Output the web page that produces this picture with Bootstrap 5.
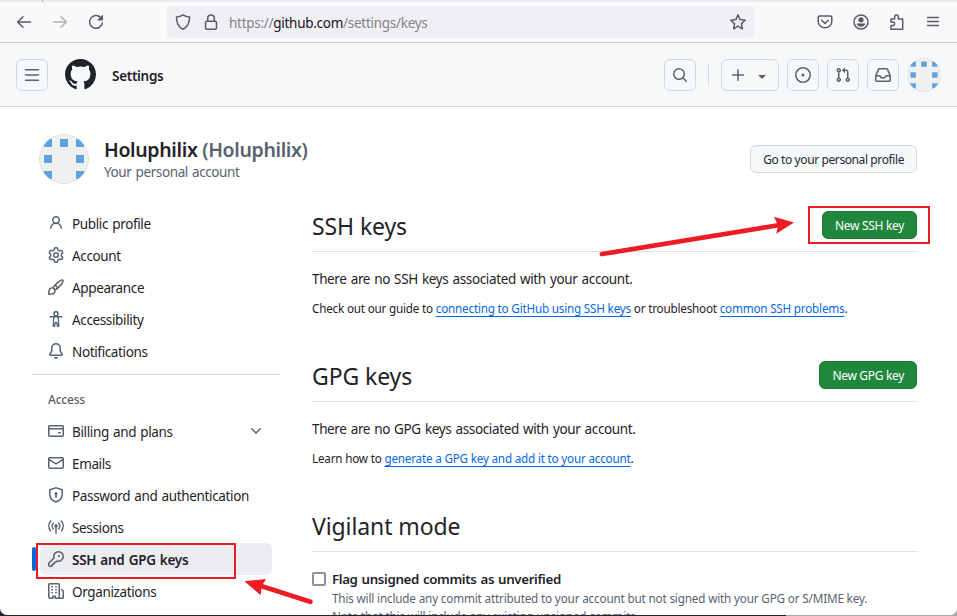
<!DOCTYPE html>
<html lang="en">
<head>
<meta charset="utf-8">
<title>SSH and GPG keys</title>
<link href="https://cdn.jsdelivr.net/npm/bootstrap@5.3.0/dist/css/bootstrap.min.css" rel="stylesheet">
<style>
  body { height: 616px; overflow: hidden; font: 13.5px/20px "Noto Sans", "Open Sans", sans-serif; color: #1f2328;
    background: linear-gradient(90deg, #23252f 786px, #a9a9ab 786px); }
  svg { display: block; flex: none; fill: currentColor; }
  .line { fill: none; stroke: currentColor; stroke-width: 1.5; stroke-linecap: round; stroke-linejoin: round; }
  .window { height: 615px; border-radius: 0 0 7px 7px; background: #fff; }

  .tabstrip { height: 2px; background: #ebebed; }
  .tabstrip span { width: 1px; margin-left: 42px; background: #b8b8bd; }
  .toolbar { height: 41px; padding: 0 16px; background: #f9f9fb; border-bottom: 1px solid #ccccd1; color: #5b5b66; }
  .travel { gap: 20px; height: 40px; }
  .faded { opacity: .45; }
  .urlbar { width: 587px; height: 32px; margin: 4px 0 0 63px; padding: 0 8px; background: #f0f0f4; border-radius: 4px; }
  .lock { margin-left: 12px; }
  .url { margin-left: 10px; padding-top: 2px; letter-spacing: -.28px; color: #84848c; }
  .url b { font-weight: 400; color: #15141a; }
  .extras { gap: 20px; height: 40px; }

  .masthead { height: 64px; background: #f6f8fa; border-bottom: 1px solid #d0d9e0; }
  .tool { height: 32px; min-width: 32px; border: 1px solid #d1d9e0; border-radius: 6px; color: #59636e; }
  .tool.create { width: 58px; }
  .rule-v { width: 1px; height: 20px; margin: 0 12px; background: #d1d9e0; }
  .caret { border: 4px solid transparent; border-top-color: #59636e; border-bottom: 0; margin: 5px 0 0 12px; }
  .octo { margin-left: 17px; }
  .page-title { margin-left: 16px; padding-top: 2px; font-weight: 600; letter-spacing: -.3px; }
  .face { border-radius: 50%; }

  .profile { height: 93px; padding: 27px 40px 0 39px; }
  .who { padding: 3px 0 0 15px; }
  .person { font-size: 19.5px; line-height: 25px; font-weight: 600; letter-spacing: -.34px; }
  .muted { color: #59636e; }
  .account { letter-spacing: -.4px; word-spacing: 1px; line-height: 21px; }
  .gh-btn { height: 28px; padding: 1px 12px 0; font-size: 12px; line-height: 26px; letter-spacing: -.4px; border-radius: 6px; white-space: nowrap;
    border: 1px solid #d1d9e0; background: #f6f8fa; color: #25292e; }
  .gh-btn.green { background: #1f883d; border-color: #1c7a39; color: #fff; letter-spacing: -.32px; }
  .profile .gh-btn { margin-top: 11px; }

  .side { width: 248px; margin-left: 32px; padding-top: 7px; }
  .side a { height: 32px; margin: 0 8px; padding: 0 8px; gap: 8px; letter-spacing: -.36px; word-spacing: 1px; border-radius: 6px; color: #1f2328; text-decoration: none; }
  .side a span { padding-top: 2px; }
  .side svg { color: #59636e; }
  .side hr { margin: 7px 0 0; border: 0; border-top: 1px solid #d1d9e0; opacity: 1; }
  .side h3 { font-size: 12px; line-height: 18px; margin: 16px 16px 6px; color: #59636e; letter-spacing: -.2px; }
  .side a.current { background: #ebedf0; font-weight: 600; letter-spacing: -.3px; }
  .side a.current::before { content: ""; position: absolute; left: -8px; top: 4px; width: 4px; height: 24px; border-radius: 6px; background: #0969da; }

  .keys { width: 605px; margin-left: 32px; padding-top: 6px; }
  .keys section { height: 150px; }
  .keys header { height: 46px; padding-top: 5px; border-bottom: 1px solid #dfe1e4; }
  .keys h2 { font-size: 23px; line-height: 30px; font-weight: 400; letter-spacing: -.1px; margin: 0; }
  .keys p { margin: 0; }
  .para { padding-top: 17px; letter-spacing: -.37px; word-spacing: 1px; }
  .hint { padding-top: 10px; font-size: 11.7px; line-height: 18px; letter-spacing: -.2px; }
  .hint a { color: #0969da; text-decoration: underline; text-decoration-thickness: 1px; text-underline-offset: 3px; text-decoration-skip-ink: none; }
  .vigilant { padding-top: 17px; gap: 6px; }
  .vigilant strong { font-size: 13.3px; font-weight: 600; letter-spacing: -.36px; word-spacing: .9px; }
  .note { font-size: 11.7px; line-height: 18px; letter-spacing: -.16px; white-space: nowrap; }
  .tick { width: 14px; height: 14px; border: 2px solid #8f8f9d; border-radius: 2px; margin-top: 3px; }
  .notes { position: absolute; left: 0; top: 0; pointer-events: none; color: #ed1c24; }
</style>
<script src="https://cdn.jsdelivr.net/npm/bootstrap@5.3.0/dist/js/bootstrap.bundle.min.js"></script>
</head>
<body class="position-relative">
<svg width="0" height="0" class="position-absolute">
  <symbol id="identicon" viewBox="0 0 50 50">
    <clipPath id="disc"><circle cx="25" cy="25" r="24.500"/></clipPath>
    <circle cx="25" cy="25" r="24.500" fill="#f0f0f0" stroke="#d9dce0"/>
    <path clip-path="url(#disc)" fill="#5fa3da" d="M5 5h8v8H5zM21 5h8v8h-8zM37 5h8v8h-8zM5 21h8v8H5zM37 21h8v8h-8zM5 37h8v8H5zM37 37h8v8h-8z"/>
  </symbol>
</svg>

<div class="window overflow-hidden">
  <div class="tabstrip d-flex"><span></span></div>

  <div class="toolbar d-flex">
    <div class="travel d-flex align-items-center">
      <svg width="16" height="16" viewBox="0 0 16 16" class="line"><path d="M14.500 8H1.800M7 2.800 1.600 8 7 13.200"/></svg>
      <svg width="16" height="16" viewBox="0 0 16 16" class="line faded"><path d="M1.500 8h12.700M9 2.800 14.400 8 9 13.200"/></svg>
      <svg width="16" height="16" viewBox="0 0 16 16" class="line"><path d="M12.600 3.500A6.400 6.400 0 1 0 14.300 9"/><path d="M14.500 1.600V6h-4.400z" fill="currentColor" stroke-width="1"/></svg>
    </div>
    <div class="urlbar d-flex align-items-center">
      <svg width="16" height="16" viewBox="0 0 16 16" class="line"><path d="M8 .9C6 2.300 3.800 2.900 1.400 3c0 5.900 1.600 9.800 6.600 12.200 5-2.400 6.600-6.300 6.600-12.200C12.200 2.900 10 2.300 8 .9z"/></svg>
      <svg width="16" height="16" viewBox="0 0 16 16" class="line lock"><rect x="2.500" y="7.300" width="11" height="8" rx="1.500"/><path d="M4.700 7V4.200a3.300 3.300 0 0 1 6.600 0V7"/></svg>
      <span class="url">https://<b>github.com</b>/settings/keys</span>
      <svg width="16" height="16" viewBox="0 0 16 16" class="line ms-auto"><path d="m8 .9 2.100 4.700 5.100.6-3.800 3.400 1 5.200L8 12.200l-4.400 2.600 1-5.200L.8 6.200l5.100-.6z"/></svg>
    </div>
    <div class="extras d-flex align-items-center ms-auto">
      <svg width="16" height="16" viewBox="0 0 16 16" class="line"><path d="M2.500 2h11a1.300 1.300 0 0 1 1.300 1.300V7.500a6.800 6.300 0 0 1-13.600 0V3.300A1.300 1.300 0 0 1 2.500 2z"/><path d="M4.700 6.300 8 9.500l3.300-3.200"/></svg>
      <svg width="16" height="16" viewBox="0 0 16 16" class="line"><circle cx="8" cy="8" r="7"/><g fill="currentColor" stroke="none"><circle cx="8" cy="5.800" r="2.600"/><path d="M3.800 9.500h8.400c0 1.800-2 3.300-4.200 3.300s-4.200-1.500-4.200-3.300z"/></g></svg>
      <svg width="16" height="16" viewBox="0 0 16 16" class="line"><path d="M2 15.200V11.500h1.800a1.800 1.800 0 0 0 0-3.600H2V4.900h3.700V2.700a1.800 1.800 0 0 1 3.600 0v2.200h4.400v10.300z"/></svg>
      <svg width="16" height="16" viewBox="0 0 16 16" class="line"><path d="M2.500 3.500h11M2.500 7.500h11M2.500 11.500h11" stroke-width="1.300"/></svg>
    </div>
  </div>

  <div class="masthead d-flex align-items-center px-3">
    <span class="tool d-flex align-items-center justify-content-center"><svg width="16" height="16" viewBox="0 0 16 16" class="line"><path d="M1.500 2.700h13M1.500 8h13M1.500 13.300h13"/></svg></span>
    <svg class="octo" width="31" height="31" viewBox="0 0 16 16"><path d="M8 0c4.420 0 8 3.580 8 8a8.013 8.013 0 0 1-5.450 7.590c-.4.080-.55-.17-.55-.38 0-.27.010-1.130.010-2.200 0-.75-.25-1.230-.54-1.480 1.780-.2 3.650-.88 3.650-3.950 0-.88-.31-1.590-.82-2.150.080-.2.360-1.020-.080-2.120 0 0-.67-.22-2.200.82-.64-.18-1.320-.27-2-.27-.68 0-1.360.09-2 .27-1.530-1.030-2.200-.82-2.200-.82-.44 1.100-.16 1.920-.08 2.120-.51.56-.82 1.280-.82 2.150 0 3.060 1.860 3.750 3.640 3.950-.23.2-.44.55-.51 1.070-.46.21-1.610.55-2.330-.66-.15-.24-.6-.83-1.230-.82-.67.010-.27.380.010.530.34.190.730.900.820 1.130.16.450.680 1.310 2.690.940 0 .67.010 1.300.010 1.490 0 .21-.15.450-.55.380A7.995 7.995 0 0 1 0 8c0-4.420 3.580-8 8-8Z"/></svg>
    <span class="page-title">Settings</span>

    <span class="tool d-flex align-items-center justify-content-center ms-auto"><svg width="16" height="16" viewBox="0 0 16 16"><path d="M10.680 11.740a6 6 0 0 1-7.922-8.982 6 6 0 0 1 8.982 7.922l3.040 3.040a.749.749 0 0 1-.326 1.275.749.749 0 0 1-.734-.215ZM11.500 7a4.499 4.499 0 1 0-8.997 0A4.499 4.499 0 0 0 11.500 7Z"/></svg></span>
    <span class="rule-v"></span>
    <span class="tool create d-flex align-items-center px-2 me-2"><svg width="16" height="16" viewBox="0 0 16 16" class="line"><path d="M8 2.700v10.600M2.700 8h10.600"/></svg><span class="caret"></span></span>
    <span class="tool d-flex align-items-center justify-content-center me-2"><svg width="16" height="16" viewBox="0 0 16 16"><path d="M8 9.500a1.500 1.500 0 1 0 0-3 1.500 1.500 0 0 0 0 3Z"/><path d="M8 0a8 8 0 1 1 0 16A8 8 0 0 1 8 0ZM1.500 8a6.500 6.500 0 1 0 13 0 6.500 6.500 0 0 0-13 0Z"/></svg></span>
    <span class="tool d-flex align-items-center justify-content-center me-2"><svg width="16" height="16" viewBox="0 0 16 16"><path d="M1.500 3.250a2.250 2.250 0 1 1 3 2.122v5.256a2.251 2.251 0 1 1-1.500 0V5.372A2.250 2.250 0 0 1 1.500 3.250Zm5.677-.177L9.573.677A.25.25 0 0 1 10 .854V2.500h1A2.500 2.500 0 0 1 13.500 5v5.628a2.251 2.251 0 1 1-1.500 0V5a1 1 0 0 0-1-1h-1v1.646a.25.25 0 0 1-.427.177L7.177 3.427a.25.25 0 0 1 0-.354ZM3.750 2.500a.75.75 0 1 0 0 1.500.75.75 0 0 0 0-1.500Zm0 9.500a.75.75 0 1 0 0 1.500.75.75 0 0 0 0-1.500Zm8.250.75a.75.75 0 1 0 1.500 0 .75.75 0 0 0-1.500 0Z"/></svg></span>
    <span class="tool d-flex align-items-center justify-content-center me-2"><svg width="16" height="16" viewBox="0 0 16 16"><path d="M2.800 2.060A1.750 1.750 0 0 1 4.410 1h7.180c.7 0 1.333.417 1.610 1.060l2.740 6.395c.04.093.06.194.06.295v4.500A1.750 1.750 0 0 1 14.250 15H1.750A1.750 1.750 0 0 1 0 13.250v-4.500c0-.101.02-.202.06-.295Zm1.610.44a.25.25 0 0 0-.23.152L1.887 8H4.750a.75.75 0 0 1 .6.3L6.625 10h2.750l1.275-1.700a.75.75 0 0 1 .6-.3h2.863L11.820 2.652a.25.25 0 0 0-.23-.152Zm10.090 7h-2.875l-1.275 1.700a.75.75 0 0 1-.6.3h-3.500a.75.75 0 0 1-.6-.3L4.375 9.500H1.500v3.750c0 .138.112.25.25.25h12.500a.25.25 0 0 0 .25-.25Z"/></svg></span>
    <svg class="face" width="34" height="34"><use href="#identicon"/></svg>
  </div>

  <div class="profile d-flex">
    <svg class="face" width="50" height="50"><use href="#identicon"/></svg>
    <div class="who">
      <div class="person">Holuphilix <span class="muted">(Holuphilix)</span></div>
      <div class="account muted">Your personal account</div>
    </div>
    <span class="gh-btn ms-auto">Go to your personal profile</span>
  </div>

  <div class="d-flex">
    <nav class="side flex-shrink-0">
      <a href="#" class="d-flex align-items-center"><svg width="16" height="16" viewBox="0 0 16 16"><path d="M10.561 8.073a6.005 6.005 0 0 1 3.432 5.142.75.75 0 1 1-1.498.07 4.500 4.500 0 0 0-8.990 0 .75.75 0 0 1-1.498-.07 6.004 6.004 0 0 1 3.431-5.142 3.999 3.999 0 1 1 5.123 0ZM10.500 5a2.500 2.500 0 1 0-5 0 2.500 2.500 0 0 0 5 0Z"/></svg><span>Public profile</span></a>
      <a href="#" class="d-flex align-items-center"><svg width="16" height="16" viewBox="0 0 16 16"><path d="M8 0a8.200 8.200 0 0 1 .701.031C9.444.095 9.990.645 10.160 1.290l.288 1.107c.018.066.079.158.212.224.231.114.454.243.668.386.123.082.233.09.299.071l1.103-.303c.644-.176 1.392.021 1.820.63.27.385.506.792.704 1.218.315.675.111 1.422-.364 1.891l-.814.806c-.049.048-.098.147-.088.294.016.257.016.515 0 .772-.01.147.038.246.088.294l.814.806c.475.469.679 1.216.364 1.891a7.977 7.977 0 0 1-.704 1.217c-.428.61-1.176.807-1.820.63l-1.102-.302c-.067-.019-.177-.011-.3.071a5.909 5.909 0 0 1-.668.386c-.133.066-.194.158-.211.224l-.29 1.106c-.168.646-.715 1.196-1.458 1.260a8.006 8.006 0 0 1-1.402 0c-.743-.064-1.289-.614-1.458-1.260l-.289-1.106c-.018-.066-.079-.158-.212-.224a5.738 5.738 0 0 1-.668-.386c-.123-.082-.233-.09-.299-.071l-1.103.303c-.644.176-1.392-.021-1.820-.63a8.120 8.120 0 0 1-.704-1.218c-.315-.675-.111-1.422.363-1.891l.815-.806c.05-.048.098-.147.088-.294a6.214 6.214 0 0 1 0-.772c.01-.147-.038-.246-.088-.294l-.815-.806C.635 6.045.431 5.298.746 4.623a7.920 7.920 0 0 1 .704-1.217c.428-.61 1.176-.807 1.820-.63l1.102.302c.067.019.177.011.3-.071.214-.143.437-.272.668-.386.133-.066.194-.158.211-.224l.29-1.106C6.009.645 6.556.095 7.299.03 7.530.01 7.764 0 8 0Zm-.571 1.525c-.036.003-.108.036-.137.146l-.289 1.105c-.147.561-.549.967-.998 1.189-.173.086-.34.183-.5.29-.417.278-.97.423-1.529.27l-1.103-.303c-.109-.03-.175.016-.195.045-.22.312-.412.644-.573.99-.014.031-.021.11.059.19l.815.806c.411.406.562.957.53 1.456a4.709 4.709 0 0 0 0 .582c.032.499-.119 1.050-.53 1.456l-.815.806c-.081.08-.073.159-.059.19.162.346.353.677.573.989.02.03.085.076.195.046l1.102-.303c.56-.153 1.113-.008 1.530.27.161.107.328.204.501.29.447.222.85.629.997 1.189l.289 1.105c.029.109.101.143.137.146a6.600 6.600 0 0 0 1.142 0c.036-.003.108-.036.137-.146l.289-1.105c.147-.561.549-.967.998-1.189.173-.086.34-.183.5-.29.417-.278.97-.423 1.529-.27l1.103.303c.109.029.175-.016.195-.045.22-.313.411-.644.573-.99.014-.031.021-.11-.059-.19l-.815-.806c-.411-.406-.562-.957-.53-1.456a4.709 4.709 0 0 0 0-.582c-.032-.499.119-1.050.53-1.456l.815-.806c.081-.08.073-.159.059-.19a6.464 6.464 0 0 0-.573-.989c-.02-.03-.085-.076-.195-.046l-1.102.303c-.56.153-1.113.008-1.530-.27a4.440 4.440 0 0 0-.501-.29c-.447-.222-.85-.629-.997-1.189l-.289-1.105c-.029-.11-.101-.143-.137-.146a6.600 6.600 0 0 0-1.142 0ZM11 8a3 3 0 1 1-6 0 3 3 0 0 1 6 0ZM9.500 8a1.500 1.500 0 1 0-3.001.001A1.500 1.500 0 0 0 9.500 8Z"/></svg><span>Account</span></a>
      <a href="#" class="d-flex align-items-center"><svg width="16" height="16" viewBox="0 0 16 16"><path d="M11.134 1.535c.7-.509 1.416-.942 2.076-1.155.649-.21 1.463-.267 2.069.34.603.601.568 1.411.368 2.070-.202.668-.624 1.390-1.125 2.096-1.011 1.424-2.496 2.987-3.775 4.249-1.098 1.084-2.132 1.839-3.040 2.300a3.744 3.744 0 0 1-1.055 3.217c-.431.431-1.065.691-1.657.861-.614.177-1.294.287-1.914.357A21.151 21.151 0 0 1 .797 16H.743a.75.75 0 0 1-.743-.742v-.054a21.250 21.250 0 0 1 .13-2.284c.067-.647.187-1.287.358-1.914.17-.591.43-1.226.86-1.657a3.746 3.746 0 0 1 3.227-1.054c.466-.893 1.225-1.907 2.314-2.982 1.271-1.255 2.833-2.750 4.245-3.777ZM1.620 13.089c-.051.464-.086.929-.104 1.395.466-.018.932-.053 1.396-.104a10.511 10.511 0 0 0 1.668-.309c.526-.151.856-.325 1.011-.48a2.250 2.250 0 1 0-3.182-3.182c-.155.155-.329.485-.48 1.010a10.515 10.515 0 0 0-.309 1.670Zm10.396-10.340c-1.224.89-2.605 2.189-3.822 3.384l1.718 1.718c1.210-1.205 2.510-2.597 3.387-3.833.47-.662.78-1.227.912-1.662.134-.444.032-.551.009-.575-.014-.014-.113-.113-.548.027-.432.14-.995.462-1.655.942Zm-4.832 7.266a9.859 9.859 0 0 0 1.630-1.142L7.155 7.216a9.700 9.700 0 0 0-1.161 1.607c.482.302.889.71 1.190 1.192Z"/></svg><span>Appearance</span></a>
      <a href="#" class="d-flex align-items-center"><svg width="16" height="16" viewBox="0 0 16 16" class="line"><circle cx="8" cy="2.700" r="2"/><path d="M2 5.700h12M5.800 6 5.200 15.200h1.300L7.300 11.500h1.400l.8 3.700h1.300L10.200 6" stroke-width="1.350"/></svg><span>Accessibility</span></a>
      <a href="#" class="d-flex align-items-center"><svg width="16" height="16" viewBox="0 0 16 16"><path d="M8 16a2 2 0 0 0 1.985-1.750c.017-.137-.097-.25-.235-.25h-3.500c-.138 0-.252.113-.235.25A2 2 0 0 0 8 16ZM3 5a5 5 0 0 1 10 0v2.947c0 .05.015.098.042.139l1.703 2.555A1.519 1.519 0 0 1 13.482 13H2.518a1.516 1.516 0 0 1-1.263-2.360l1.703-2.554A.255.255 0 0 0 3 7.947Zm5-3.500A3.500 3.500 0 0 0 4.500 5v2.947c0 .346-.102.683-.294.97l-1.703 2.556.015.027h10.964l.015-.027-1.703-2.556a1.745 1.745 0 0 1-.294-.97V5A3.500 3.500 0 0 0 8 1.500Z"/></svg><span>Notifications</span></a>
      <hr>
      <h3>Access</h3>
      <a href="#" class="d-flex align-items-center"><svg width="16" height="16" viewBox="0 0 16 16"><path d="M10.750 9a.75.75 0 0 0 0 1.500h1.500a.75.75 0 0 0 0-1.500h-1.500Z"/><path d="M0 3.750C0 2.784.784 2 1.750 2h12.500c.966 0 1.750.784 1.750 1.750v8.500A1.750 1.750 0 0 1 14.250 14H1.750A1.750 1.750 0 0 1 0 12.250ZM14.500 6.500h-13v5.750c0 .138.112.25.25.25h12.500a.25.25 0 0 0 .25-.25Zm0-2.750a.25.25 0 0 0-.25-.25H1.750a.25.25 0 0 0-.25.25V5h13Z"/></svg><span>Billing and plans</span><svg class="ms-auto" width="16" height="16" viewBox="0 0 16 16"><path d="M12.780 5.220a.749.749 0 0 1 0 1.060l-4.250 4.250a.749.749 0 0 1-1.060 0L3.220 6.280a.749.749 0 1 1 1.060-1.060L8 8.939l3.720-3.719a.749.749 0 0 1 1.060 0Z"/></svg></a>
      <a href="#" class="d-flex align-items-center"><svg width="16" height="16" viewBox="0 0 16 16"><path d="M1.750 2h12.500c.966 0 1.750.784 1.750 1.750v8.500A1.750 1.750 0 0 1 14.250 14H1.750A1.750 1.750 0 0 1 0 12.250v-8.500C0 2.784.784 2 1.750 2ZM1.500 12.251c0 .138.112.25.25.25h12.500a.25.25 0 0 0 .25-.25V5.809L8.380 9.397a.75.75 0 0 1-.76 0L1.500 5.809v6.442Zm13-8.181v-.32a.25.25 0 0 0-.25-.25H1.750a.25.25 0 0 0-.25.25v.32L8 7.880Z"/></svg><span>Emails</span></a>
      <a href="#" class="d-flex align-items-center"><svg width="16" height="16" viewBox="0 0 16 16"><path d="m8.533.133 5.250 1.680A1.750 1.750 0 0 1 15 3.480V7c0 1.566-.32 3.182-1.303 4.682-.983 1.498-2.585 2.813-5.032 3.855a1.697 1.697 0 0 1-1.330 0c-2.447-1.042-4.049-2.357-5.032-3.855C1.320 10.182 1 8.566 1 7V3.480a1.755 1.755 0 0 1 1.217-1.667l5.250-1.680a1.748 1.748 0 0 1 1.066 0Zm-.61 1.430-5.250 1.680a.251.251 0 0 0-.174.237V7c0 1.360.275 2.666 1.057 3.859.784 1.194 2.121 2.342 4.366 3.298a.196.196 0 0 0 .154 0c2.245-.957 3.582-2.103 4.366-3.297C13.225 9.666 13.500 8.358 13.500 7V3.480a.25.25 0 0 0-.174-.238l-5.250-1.680a.25.25 0 0 0-.153 0ZM9.500 6.500c0 .536-.286 1.032-.75 1.300v2.450a.75.75 0 0 1-1.500 0V7.800A1.500 1.500 0 1 1 9.500 6.500Z"/></svg><span>Password and authentication</span></a>
      <a href="#" class="d-flex align-items-center"><svg width="16" height="16" viewBox="0 0 16 16" class="line"><circle cx="8" cy="7" r="1.400" fill="currentColor" stroke-width=".6"/><path d="M8 8v6.200M5.300 4.200a4 4 0 0 0 0 5.600M10.700 4.200a4 4 0 0 1 0 5.600M2.600 2a8 8 0 0 0 0 10M13.400 2a8 8 0 0 1 0 10"/></svg><span>Sessions</span></a>
      <a href="#" class="current d-flex align-items-center position-relative"><svg width="16" height="16" viewBox="0 0 16 16"><path d="M10.500 0a5.499 5.499 0 1 1-1.288 10.848l-.932.932a.749.749 0 0 1-.53.22H7v.75a.749.749 0 0 1-.22.53l-.5.5a.749.749 0 0 1-.53.22H5v.75a.749.749 0 0 1-.22.53l-.5.5a.749.749 0 0 1-.53.22h-2A1.750 1.750 0 0 1 0 14.250v-2c0-.199.079-.389.22-.53l4.932-4.932A5.500 5.500 0 0 1 10.500 0Zm-4 5.500c-.001.431.069.86.205 1.269a.75.75 0 0 1-.181.768L1.500 12.560v1.690c0 .138.112.25.25.25h1.690l.06-.06v-1.190a.75.75 0 0 1 .75-.75h1.190l.06-.06v-1.190a.75.75 0 0 1 .75-.75h1.190l1.023-1.025a.75.75 0 0 1 .768-.18A4 4 0 1 0 6.500 5.500ZM11 6a1 1 0 1 1 0-2 1 1 0 0 1 0 2Z"/></svg><span>SSH and GPG keys</span></a>
      <a href="#" class="d-flex align-items-center"><svg width="16" height="16" viewBox="0 0 16 16"><path d="M1.750 16A1.750 1.750 0 0 1 0 14.250V1.750C0 .784.784 0 1.750 0h8.500C11.216 0 12 .784 12 1.750v12.500c0 .085-.006.168-.018.25h2.268a.25.25 0 0 0 .25-.25V8.285a.25.25 0 0 0-.111-.208l-1.055-.703a.749.749 0 1 1 .832-1.248l1.055.703c.487.325.779.871.779 1.456v5.717A1.750 1.750 0 0 1 14.250 16h-3.500a.766.766 0 0 1-.197-.026c-.099.017-.2.026-.303.026h-3a.75.75 0 0 1-.75-.75V14h-1v1.250a.75.75 0 0 1-.75.75Zm-.25-1.750c0 .138.112.25.25.25H4v-1.250a.75.75 0 0 1 .75-.75h2.500a.75.75 0 0 1 .75.75v1.250h2.250a.25.25 0 0 0 .25-.25V1.750a.25.25 0 0 0-.25-.25h-8.500a.25.25 0 0 0-.25.25Z"/><path class="line" d="M3.750 3.750h.5M3.750 6.750h.5M3.750 9.750h.5M7.750 3.750h.5M7.750 6.750h.5M7.750 9.750h.5"/></svg><span>Organizations</span></a>
    </nav>

    <main class="keys">
      <section>
        <header class="d-flex justify-content-between"><h2>SSH keys</h2><span class="gh-btn green">New SSH key</span></header>
        <p class="para">There are no SSH keys associated with your account.</p>
        <p class="hint">Check out our guide to <a href="#">connecting to GitHub using SSH keys</a> or troubleshoot <a href="#">common SSH problems</a>.</p>
      </section>
      <section>
        <header class="d-flex justify-content-between"><h2>GPG keys</h2><span class="gh-btn green">New GPG key</span></header>
        <p class="para">There are no GPG keys associated with your account.</p>
        <p class="hint">Learn how to <a href="#">generate a GPG key and add it to your account</a>.</p>
      </section>
      <section>
        <header><h2>Vigilant mode</h2></header>
        <div class="vigilant d-flex">
          <span class="tick"></span>
          <div>
            <strong class="d-block">Flag unsigned commits as unverified</strong>
            <p class="note muted">This will include any commit attributed to your account but not signed with your GPG or S/MIME key.<br>Note that this will include any existing unsigned commits.</p>
          </div>
        </div>
      </section>
    </main>
  </div>
</div>

<svg class="notes" width="957" height="616" viewBox="0 0 957 616">
  <g fill="none" stroke="currentColor" stroke-width="2">
    <path d="M809 207h120v36H809zM37 544h198v34H37z"/>
    <path d="M602 254 780 225M310.300 601.700 258 585" stroke-width="4.800" stroke-linecap="round"/>
  </g>
  <path d="M794 222.500 774 216.800 778 225.500 776.300 233.700zM244.500 581.300 266.200 579 261.500 586 260.700 595.200z"/>
</svg>
</body>
</html>
